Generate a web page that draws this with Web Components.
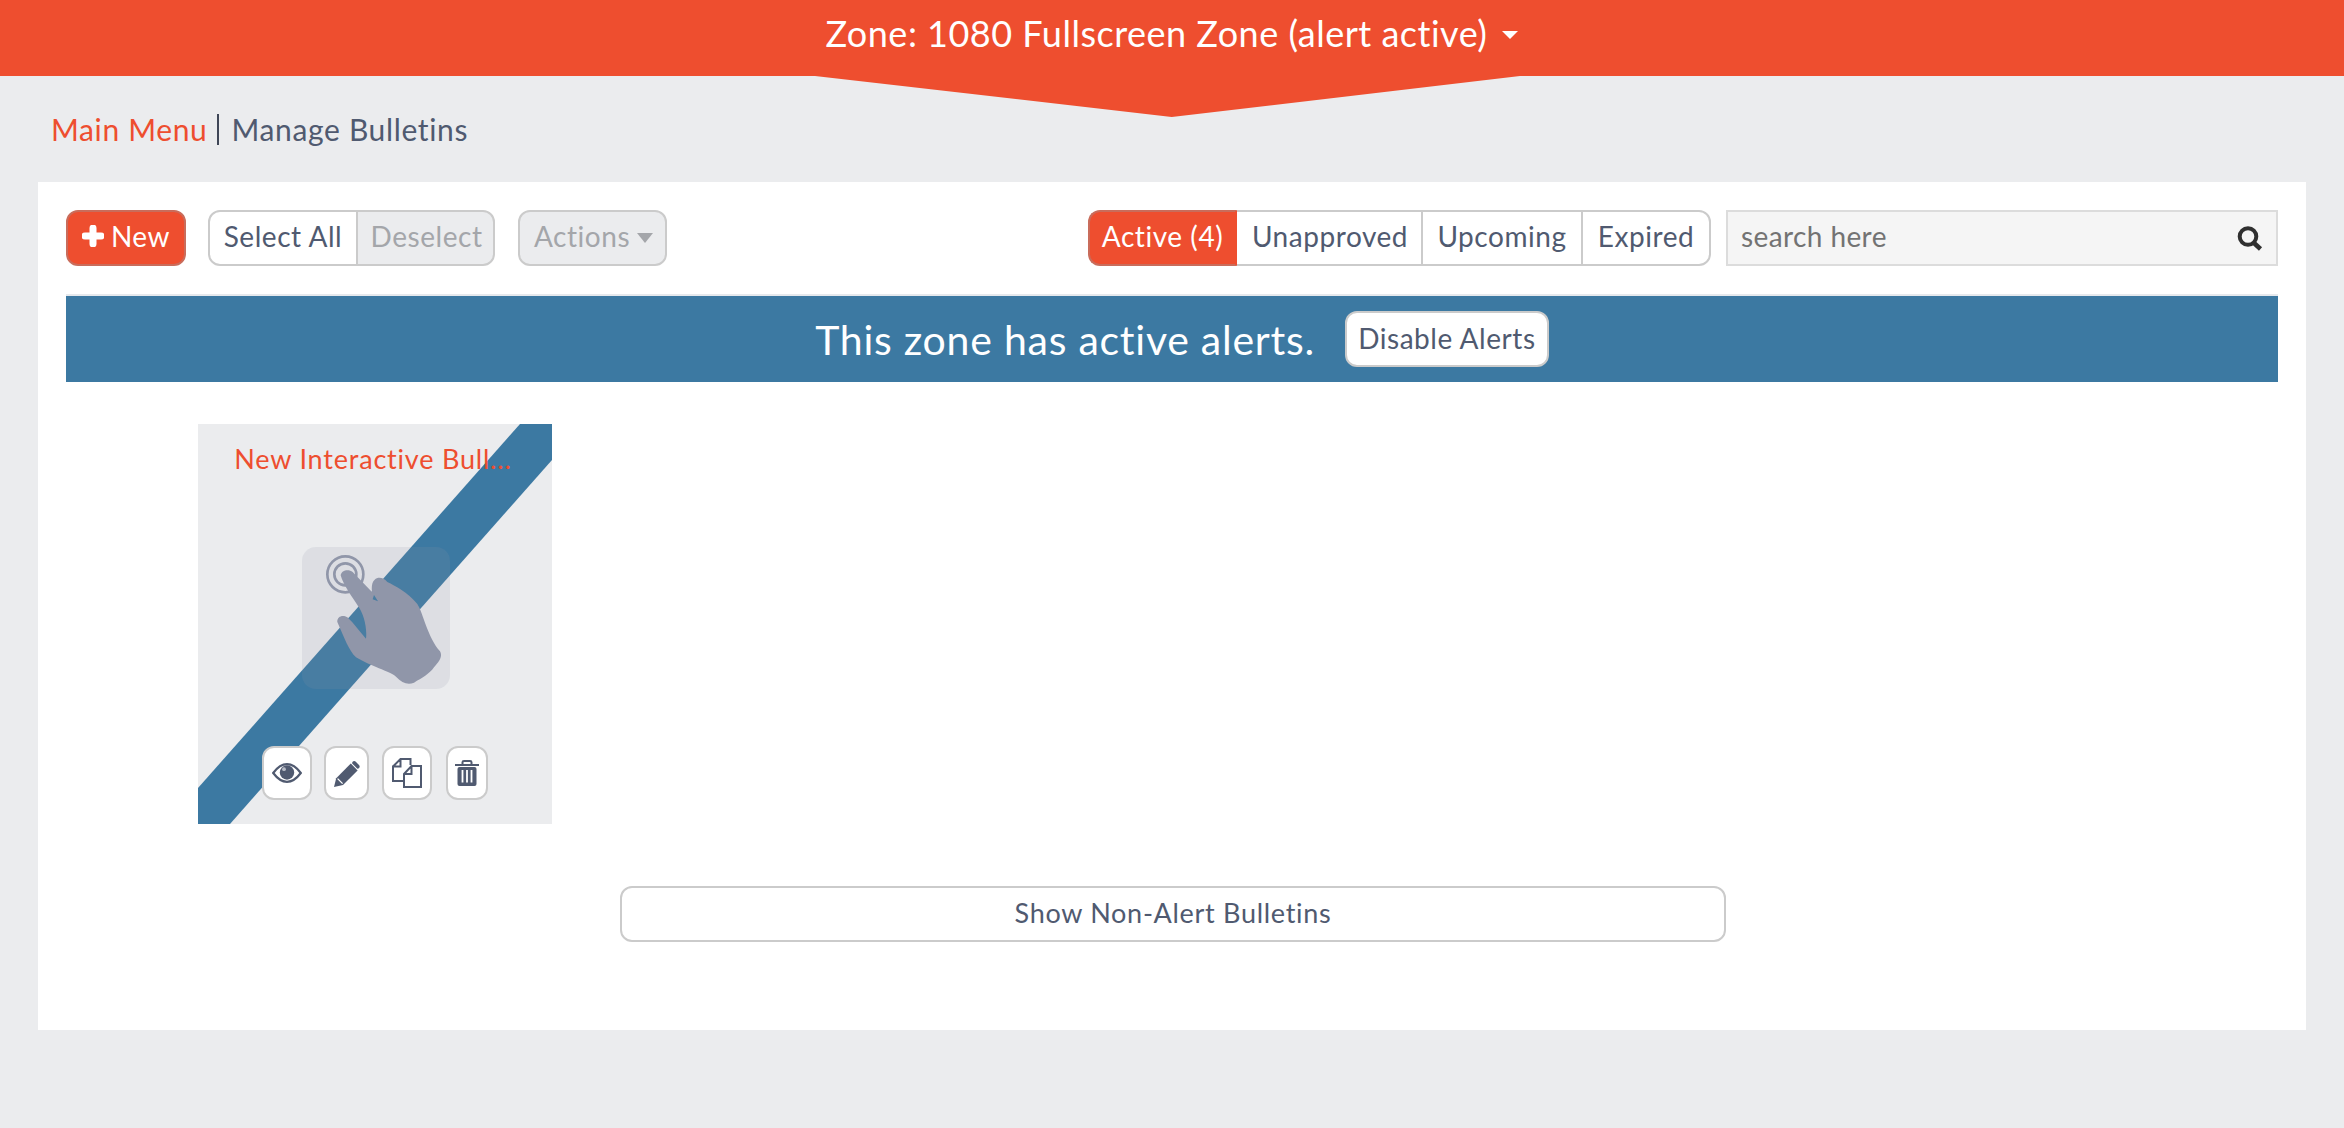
<!DOCTYPE html>
<html lang="en">
<head>
<meta charset="utf-8">
<title>Manage Bulletins</title>
<style>
  html,body{margin:0;padding:0;}
  body{background:#ebecee;font-family:"Lato","Liberation Sans",sans-serif;color:#505a70;}
</style>
</head>
<body>
<zone-bar>Zone: 1080 Fullscreen Zone (alert active)</zone-bar>
<bread-crumbs></bread-crumbs>
<bulletin-panel></bulletin-panel>

<script>
  // shared button look, every element below pulls this into its own shadow root
  const BTN_CSS = `
    .btn{
      box-sizing:border-box;
      height:56px;
      padding-bottom:4px;
      display:flex;
      align-items:center;
      justify-content:center;
      border:2px solid #cbcbcb;
      background:#fff;
      color:#505a70;
      font-size:28px;
      letter-spacing:.55px;
      white-space:nowrap;
    }
    .on{background:#ee4e2f;border-color:#c96c5b;color:#fff;}
    .off{background:#ebecee;color:#a4a6aa;}
  `;

  class ZoneBar extends HTMLElement{
    constructor(){
      super();
      this.attachShadow({mode:'open'});
      this.render();
    }
    render(){
      this.shadowRoot.innerHTML=`
        <style>
          :host{display:block;position:relative;height:76px;background:#ee4e2f;color:#fff;}
          .label{
            height:66px;
            display:flex;align-items:center;justify-content:center;gap:15px;
            font-size:36px;letter-spacing:.5px;
          }
          .caret{width:0;height:0;border:8px solid transparent;border-top-color:#fff;border-bottom:0;margin-top:3px;}
          .arrow{
            position:absolute;left:815px;top:76px;width:705px;height:41px;
            background:#ee4e2f;
            clip-path:polygon(0 0,100% 0,50.6% 100%);
          }
        </style>
        <div class="label"><slot></slot><span class="caret"></span></div>
        <div class="arrow"></div>
      `;
    }
  }

  class BreadCrumbs extends HTMLElement{
    constructor(){
      super();
      this.attachShadow({mode:'open'});
      this.render();
    }
    render(){
      this.shadowRoot.innerHTML=`
        <style>
          :host{display:flex;align-items:center;box-sizing:border-box;height:106px;padding:0 0 0 51px;font-size:30px;letter-spacing:.65px;color:#505a70;}
          a{color:#ee4e2f;}
          .sep{width:2px;height:31px;background:#3f4657;margin:0 12px 0 10px;}
        </style>
        <a>Main Menu</a><span class="sep"></span><span>Manage Bulletins</span>
      `;
    }
  }

  class BulletinToolbar extends HTMLElement{
    constructor(){
      super();
      this.attachShadow({mode:'open'});
      this.render();
    }
    render(){
      this.shadowRoot.innerHTML=`
        <style>
          :host{display:flex;align-items:center;height:56px;}
          ${BTN_CSS}
          .new{width:120px;border-radius:12px;gap:7px;margin-right:22px;}
          .group{display:flex;}
          .group .btn + .btn{margin-left:-2px;}
          .select{width:150px;border-radius:12px 0 0 12px;}
          .deselect{width:139px;border-radius:0 12px 12px 0;padding-left:2px;}
          .actions{width:149px;border-radius:12px;gap:7px;margin-left:23px;padding-left:2px;}
          .caret{width:0;height:0;border:8px solid transparent;border-top:10px solid #a4a6aa;border-bottom:0;margin-top:3px;}
          .tabs{margin-left:auto;}
          .tabs .btn:first-child{position:relative;z-index:1;border-radius:12px 0 0 12px;width:149px;border-right-color:#ee4e2f;}
          .tabs .btn:nth-child(2){width:188px;padding-left:2px;}
          .tabs .btn:nth-child(3){width:162px;}
          .tabs .btn:last-child{border-radius:0 12px 12px 0;width:130px;}
          .search{
            box-sizing:border-box;width:552px;height:56px;margin-left:15px;
            display:flex;align-items:center;justify-content:space-between;
            padding:0 13px 4px 13px;
            background:#f5f5f5;border:2px solid #dcdcdc;
            font-size:28px;letter-spacing:.4px;color:#737373;
          }
          .search svg{margin-top:4px;}
        </style>
        <div class="btn on new">
          <svg width="22" height="22" viewBox="0 0 22 22"><path d="M11 3V19M3 11H19" stroke="#fff" stroke-width="7" stroke-linecap="round" fill="none"/></svg>
          <span>New</span>
        </div>
        <div class="group">
          <div class="btn select">Select All</div>
          <div class="btn off deselect">Deselect</div>
        </div>
        <div class="btn off actions">Actions<span class="caret"></span></div>
        <div class="group tabs">
          <div class="btn on">Active (4)</div>
          <div class="btn">Unapproved</div>
          <div class="btn">Upcoming</div>
          <div class="btn">Expired</div>
        </div>
        <div class="search">
          <span>search here</span>
          <svg width="26" height="25" viewBox="0 0 26 25"><circle cx="11" cy="10.500" r="8.300" stroke="#303030" stroke-width="4" fill="none"/><path d="M17 17L23.500 23" stroke="#303030" stroke-width="4.600" fill="none"/></svg>
        </div>
      `;
    }
  }

  class AlertBanner extends HTMLElement{
    constructor(){
      super();
      this.attachShadow({mode:'open'});
      this.render();
    }
    render(){
      this.shadowRoot.innerHTML=`
        <style>
          :host{
            display:flex;align-items:center;justify-content:center;gap:30px;
            box-sizing:border-box;height:88px;margin-top:28px;padding-left:20px;
            border-top:2px solid #e6e9ed;
            background:#3c79a2;color:#fff;
            font-size:41px;letter-spacing:.75px;
          }
          ${BTN_CSS}
          .btn{width:204px;border-radius:12px;padding-bottom:3px;}
        </style>
        <span><slot></slot></span>
        <div class="btn">Disable Alerts</div>
      `;
    }
  }

  class IconBtn extends HTMLElement{
    constructor(){
      super();
      this.attachShadow({mode:'open'});
      this.shadowRoot.innerHTML=`
        <style>
          :host{
            display:flex;align-items:center;justify-content:center;
            box-sizing:border-box;height:54px;
            background:#fff;border:2px solid #cbcbcb;border-radius:12px;
          }
        </style>
        <slot></slot>
      `;
    }
  }

  class BulletinCard extends HTMLElement{
    constructor(){
      super();
      this.attachShadow({mode:'open'});
      this.render();
    }
    render(){
      this.shadowRoot.innerHTML=`
        <style>
          :host{
            display:flex;flex-direction:column;align-items:center;
            position:relative;box-sizing:border-box;width:354px;height:400px;
            background:#ebecee;overflow:hidden;
          }
          .stripe{position:absolute;left:0;top:0;}
          .title{
            position:relative;margin:17px 4px 0 0;height:36px;line-height:36px;
            font-size:27px;letter-spacing:.8px;color:#ee4e2f;white-space:nowrap;
          }
          .tile{
            position:relative;width:148px;height:142px;margin:70px 0 0 2px;
            border-radius:14px;background:rgba(142,149,168,.15);
          }
          .tile svg{position:absolute;left:-12px;top:-17px;filter:blur(.5px);}
          .actions{position:relative;display:flex;margin-top:57px;}
        </style>
        <svg class="stripe" width="354" height="400" viewBox="0 0 354 400"><polygon points="322,0 354,0 354,36 32,400 0,400 0,364" fill="#3c79a2"/></svg>
        <div class="title"><slot name="title"></slot></div>
        <div class="tile">
          <svg width="170" height="170" viewBox="0 0 510 510">
            <g fill="none" stroke="#9096a9">
              <circle cx="166" cy="133" r="54" stroke-width="8"/>
              <circle cx="166" cy="133" r="33" stroke-width="8"/>
            </g>
            <path fill="#9096a9" fill-rule="evenodd" d="M152 136C154 120 176 116 188 126L246 186C244 170 246 156 254 149C264 140 280 142 292 156C316 168 352 186 382 222C400 250 412 320 450 364C458 378 450 392 432 412C418 432 396 444 372 458C352 466 336 458 318 440C300 424 240 408 198 382C176 360 164 326 142 276C140 262 156 252 172 262C192 280 208 304 228 326C232 290 220 250 204 228C186 200 160 165 152 136ZM252 195L264 214L248 208Z"/>
          </svg>
        </div>
        <div class="actions"><slot></slot></div>
      `;
    }
  }

  class BulletinPanel extends HTMLElement{
    constructor(){
      super();
      this.attachShadow({mode:'open'});
      this.render();
    }
    render(){
      this.shadowRoot.innerHTML=`
        <style>
          :host{display:block;box-sizing:border-box;height:848px;margin:0 38px;padding:28px 28px 0;background:#fff;}
          ${BTN_CSS}
          bulletin-card{margin:42px 0 0 132px;}
          icon-btn:nth-of-type(1){width:50px;}
          icon-btn:nth-of-type(2){width:45px;margin-left:12px;}
          icon-btn:nth-of-type(3){width:50px;margin-left:13px;}
          icon-btn:nth-of-type(4){width:42px;margin-left:14px;}
          .more{width:1106px;margin:62px 0 0 554px;border-radius:12px;font-size:27px;letter-spacing:.7px;padding-bottom:3px;}
        </style>
        <bulletin-toolbar></bulletin-toolbar>
        <alert-banner>This zone has active alerts.</alert-banner>
        <bulletin-card>
          <span slot="title">New Interactive Bull...</span>
          <icon-btn>
            <svg width="30" height="20" viewBox="0 0 30 20"><path d="M1.200 10C6 3.600 10 1.200 15 1.200S24 3.600 28.800 10C24 16.400 20 18.800 15 18.800S6 16.400 1.200 10Z" fill="none" stroke="#505a70" stroke-width="2.200"/><circle cx="15" cy="9.500" r="7.200" fill="#505a70"/><circle cx="12" cy="6.200" r="1.900" fill="#b8bcc7"/></svg>
          </icon-btn>
          <icon-btn>
            <svg width="26" height="27" viewBox="0 0 26 27"><path d="M0 27L2.200 18.200L16.800 3.600L23.600 10.400L9 25Z" fill="#505a70"/><path d="M18.600 1.800Q20.200 .4 21.800 1.800L25 5Q26.400 6.600 25 8.200L23.400 8.800L18 3.200Z" fill="#505a70"/><path d="M3.600 18.600L8.600 23.600" stroke="#fff" stroke-width="1.300"/></svg>
          </icon-btn>
          <icon-btn>
            <svg width="30" height="30" viewBox="0 0 30 30" fill="none" stroke="#505a70" stroke-width="2"><path d="M1 8.500L8.500 1H18.500V7M11 23H1V8.500H8.500V1"/><path d="M12 16L19.500 8H29V29H12ZM12 16H19.500V8"/></svg>
          </icon-btn>
          <icon-btn>
            <svg width="24" height="26" viewBox="0 0 24 26"><path d="M0 5H24M7.500 4V2.200Q7.500 1 9 1H15Q16.500 1 16.500 2.200V4" fill="none" stroke="#505a70" stroke-width="2"/><rect x="2.500" y="7" width="19" height="19" rx="2" fill="#505a70"/><path d="M7.500 10V22.500M12 10V22.500M16.500 10V22.500" stroke="#fff" stroke-width="1.800"/></svg>
          </icon-btn>
        </bulletin-card>
        <div class="btn more">Show Non-Alert Bulletins</div>
      `;
    }
  }

  window.customElements.define('zone-bar',ZoneBar);
  window.customElements.define('bread-crumbs',BreadCrumbs);
  window.customElements.define('bulletin-toolbar',BulletinToolbar);
  window.customElements.define('alert-banner',AlertBanner);
  window.customElements.define('icon-btn',IconBtn);
  window.customElements.define('bulletin-card',BulletinCard);
  window.customElements.define('bulletin-panel',BulletinPanel);
</script>
</body>
</html>
